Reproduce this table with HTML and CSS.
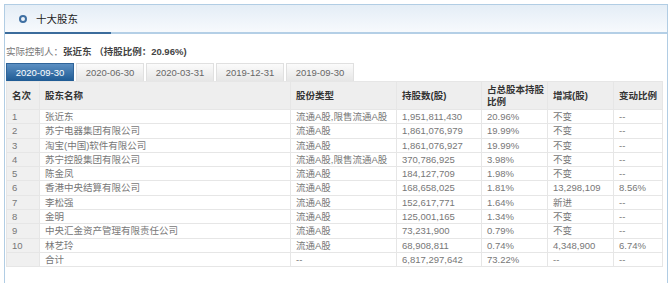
FILE: index.html
```
<!DOCTYPE html>
<html lang="zh-CN">
  <head>
    <meta charset="UTF-8" />
    <title>十大股东</title>
    <link rel="stylesheet" href="styles.css">
  </head>
  <body>
    <div class="panel">
      <div class="panel-hd">
        <i class="ring"></i>
        <h2>十大股东</h2>
      </div>

      <p class="holder"><span class="label">实际控制人：</span><b>张近东 （持股比例：20.96%)</b></p>

      <!-- 报告期 -->
      <ul class="tabs">
        <li class="on">2020-09-30</li>
        <li>2020-06-30</li>
        <li>2020-03-31</li>
        <li>2019-12-31</li>
        <li>2019-09-30</li>
      </ul>

      <table class="holders">
        <colgroup>
          <col class="c-rank" />
          <col class="c-name" />
          <col class="c-type" />
          <col class="c-num" />
          <col class="c-pct" />
          <col class="c-chg" />
          <col class="c-rate" />
        </colgroup>
        <thead>
          <tr>
            <th>名次</th>
            <th>股东名称</th>
            <th>股份类型</th>
            <th>持股数(股)</th>
            <th>占总股本持股<br />比例</th>
            <th>增减(股)</th>
            <th>变动比例</th>
          </tr>
        </thead>
        <tbody>
          <tr><td>1</td><td>张近东</td><td>流通A股,限售流通A股</td><td>1,951,811,430</td><td>20.96%</td><td>不变</td><td>--</td></tr>
          <tr><td>2</td><td>苏宁电器集团有限公司</td><td>流通A股</td><td>1,861,076,979</td><td>19.99%</td><td>不变</td><td>--</td></tr>
          <tr><td>3</td><td>淘宝(中国)软件有限公司</td><td>流通A股</td><td>1,861,076,927</td><td>19.99%</td><td>不变</td><td>--</td></tr>
          <tr><td>4</td><td>苏宁控股集团有限公司</td><td>流通A股,限售流通A股</td><td>370,786,925</td><td>3.98%</td><td>不变</td><td>--</td></tr>
          <tr><td>5</td><td>陈金凤</td><td>流通A股</td><td>184,127,709</td><td>1.98%</td><td>不变</td><td>--</td></tr>
          <tr><td>6</td><td>香港中央结算有限公司</td><td>流通A股</td><td>168,658,025</td><td>1.81%</td><td>13,298,109</td><td>8.56%</td></tr>
          <tr><td>7</td><td>李松强</td><td>流通A股</td><td>152,617,771</td><td>1.64%</td><td>新进</td><td>--</td></tr>
          <tr><td>8</td><td>金明</td><td>流通A股</td><td>125,001,165</td><td>1.34%</td><td>不变</td><td>--</td></tr>
          <tr><td>9</td><td>中央汇金资产管理有限责任公司</td><td>流通A股</td><td>73,231,900</td><td>0.79%</td><td>不变</td><td>--</td></tr>
          <tr><td>10</td><td>林艺玲</td><td>流通A股</td><td>68,908,811</td><td>0.74%</td><td>4,348,900</td><td>6.74%</td></tr>
          <tr><td></td><td>合计</td><td>--</td><td>6,817,297,642</td><td>73.22%</td><td>--</td><td>--</td></tr>
        </tbody>
      </table>
    </div>
  </body>
</html>
```

FILE: styles.css
```
body {
  margin: 0;
  padding: 4px 4px 0 4px;
  background-color: #ffffff;
  font-family: "Liberation Sans", "Noto Sans CJK SC", sans-serif;
  font-size: 9.5px;
  color: #777;
}

.panel {
  border: 1px solid #b1cde4;
  border-bottom: none;
  padding: 0 4px 30px 1px;
}

.panel-hd {
  display: flex;
  align-items: center;
  gap: 9px;
  height: 27px;
  margin: 0 -4px 0 -1px;
  padding-left: 14px;
  background: linear-gradient(to bottom, #e4edf6, #f7fafd);
  border-bottom: 2px solid;
  border-image: linear-gradient(to right, #3b6c9c 107px, #b4cfe6 107px) 1;
}

.ring {
  display: block;
  width: 4px;
  height: 4px;
  border: 2px solid #3e6fa2;
  border-radius: 50%;
}

.panel-hd h2 {
  margin: 0;
  font-size: 10.5px;
  font-weight: normal;
  color: #222;
}

.holder {
  margin: 11px 0 4px 0;
  line-height: 14px;
}

.holder b {
  color: #444;
}

.tabs {
  display: flex;
  gap: 2px;
  list-style: none;
  margin: 0;
  padding: 0;
}

.tabs li {
  width: 66px;
  height: 17px;
  line-height: 17px;
  text-align: center;
  color: #666;
  border: 1px solid #e0e0e0;
  border-bottom: none;
  background: linear-gradient(to bottom, #fbfbfb, #e6e6e6);
}

.tabs li.on {
  color: #fff;
  border-color: #2f6499;
  background: linear-gradient(to bottom, #5b8fc2, #1f5b94);
}

.holders {
  width: 656px;
  border-collapse: collapse;
  table-layout: fixed;
}

.c-rank { width: 33px; }
.c-name { width: 251px; }
.c-type { width: 106px; }
.c-num { width: 85px; }
.c-pct { width: 66px; }
.c-chg { width: 66px; }
.c-rate { width: 49px; }

.holders th,
.holders td {
  border: 1px solid #e6e6e6;
  padding: 0 5px;
  text-align: left;
  white-space: nowrap;
}

.holders th {
  height: 27px;
  line-height: 12px;
  background-color: #eeeeee;
  color: #333;
  font-weight: bold;
}

.holders td {
  line-height: 13.3px;
}

.holders td:first-child {
  background-color: #f0f0f0;
}
```
